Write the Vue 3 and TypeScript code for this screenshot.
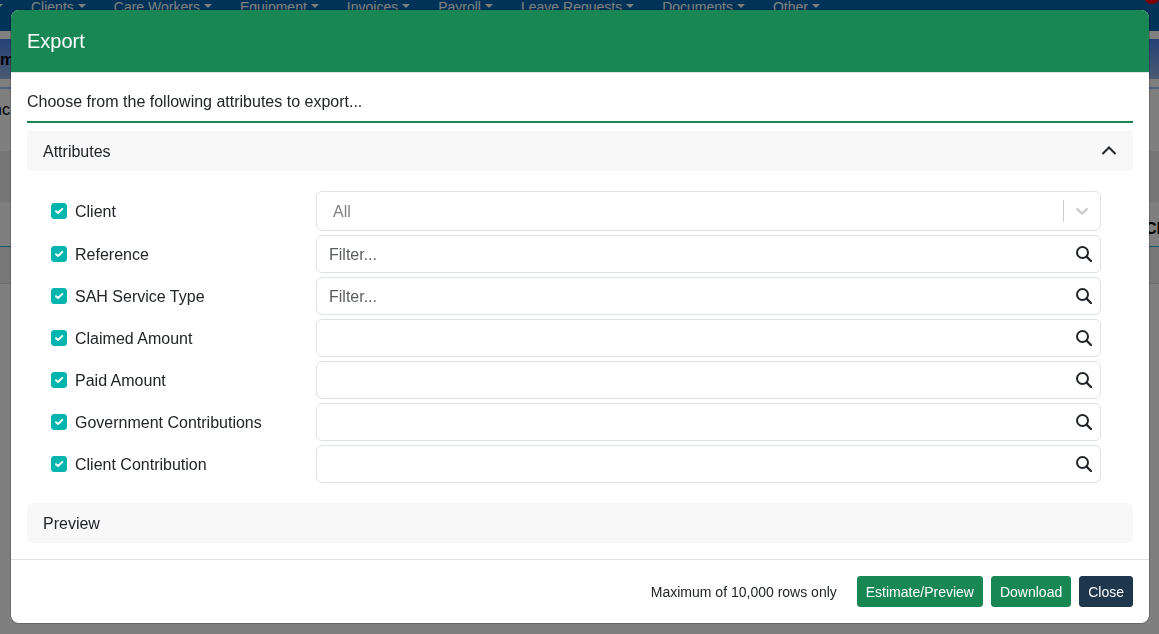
<script setup lang="ts">
import { ref } from 'vue'

interface Attribute {
  id: string
  label: string
  kind: 'select' | 'text'
  placeholder: string
  value: string
  checked: boolean
}

const menus: string[] = ['Clients', 'Care Workers', 'Equipment', 'Invoices', 'Payroll', 'Leave Requests', 'Documents', 'Other']

const make = (id: string, label: string, placeholder = '', kind: 'select' | 'text' = 'text'): Attribute => ({
  id, label, kind, placeholder, value: '', checked: true,
})

const attributes = ref<Attribute[]>([
  make('client', 'Client', 'All', 'select'),
  make('reference', 'Reference', 'Filter...'),
  make('service-type', 'SAH Service Type', 'Filter...'),
  make('claimed', 'Claimed Amount'),
  make('paid', 'Paid Amount'),
  make('government', 'Government Contributions'),
  make('contribution', 'Client Contribution'),
])

const attributesOpen = ref(true)
</script>

<template>
  <div class="page">
    <nav class="navbar">
      <span class="caret"></span>
      <a v-for="m in menus" :key="m" href="#" class="menu">{{ m }}<span class="caret"></span></a>
      <span class="badge"></span>
    </nav>
    <div class="banner"><b>m</b></div>
    <div class="tabs"><span>nc</span></div>
    <div class="stripe"></div>
    <div class="grid-head"><b>Cl</b></div>
    <div class="grid-row"></div>
  </div>

  <div class="backdrop">
    <section class="modal" role="dialog" aria-modal="true" aria-labelledby="export-title">
      <header class="modal-header">
        <h1 id="export-title">Export</h1>
      </header>
      <div class="modal-body">
        <p class="intro">Choose from the following attributes to export...</p>

        <button class="section-toggle open" type="button" :aria-expanded="attributesOpen" @click="attributesOpen = !attributesOpen">
          Attributes
          <svg width="16" height="16" viewBox="0 0 16 16" aria-hidden="true">
            <path d="M1.5 10 8 3.5 14.5 10" fill="none" stroke="#212529" stroke-width="2" />
          </svg>
        </button>

        <div v-if="attributesOpen" class="fields">
          <div v-for="a in attributes" :key="a.id" class="field">
            <label class="check">
              <input v-model="a.checked" type="checkbox" />
              <span>{{ a.label }}</span>
            </label>
            <div v-if="a.kind === 'select'" class="control select-control">
              <select v-model="a.value" :aria-label="a.label">
                <option value="">{{ a.placeholder }}</option>
              </select>
              <span class="chevron">
                <svg width="20" height="20" viewBox="0 0 20 20" aria-hidden="true">
                  <path d="M5.2 8.2 10 12.6 14.8 8.2" fill="none" stroke="#ccc" stroke-width="2.4" stroke-linecap="round" stroke-linejoin="round" />
                </svg>
              </span>
            </div>
            <div v-else class="control">
              <input v-model="a.value" type="text" :placeholder="a.placeholder" :aria-label="a.label" />
              <button class="search" type="button" :aria-label="'Search ' + a.label">
                <svg width="16" height="16" viewBox="0 0 16 16" aria-hidden="true">
                  <circle cx="6.5" cy="6.5" r="5.5" fill="none" stroke="#212529" stroke-width="2" />
                  <path d="M10.6 10.6 15.2 15.2" fill="none" stroke="#212529" stroke-width="2.2" stroke-linecap="round" />
                </svg>
              </button>
            </div>
          </div>
        </div>

        <button class="section-toggle" type="button" aria-expanded="false">Preview</button>
      </div>
      <footer class="modal-footer">
        <span class="note">Maximum of 10,000 rows only</span>
        <button class="btn" type="button">Estimate/Preview</button>
        <button class="btn" type="button">Download</button>
        <button class="btn dark" type="button">Close</button>
      </footer>
    </section>
  </div>
</template>

<style>
body {
  overflow: hidden;
  background: #fff;
}
</style>

<style scoped>
* {
  box-sizing: border-box;
}
.page,
.backdrop {
  font-family: "Liberation Sans", Arial, sans-serif;
  font-size: 16px;
  line-height: 24px;
  color: #212529;
}
button,
input,
select {
  font: inherit;
  color: inherit;
}

/* Page behind the dialog */
.navbar {
  position: relative;
  display: flex;
  gap: 28px;
  height: 31px;
  overflow: hidden;
  background: #0066ae;
  color: #fff;
  font-size: 14px;
  line-height: 14px;
}
.navbar > .caret {
  margin: 4px 0 0 -5px;
}
.menu {
  display: flex;
  gap: 4px;
  color: #fff;
  text-decoration: none;
  white-space: nowrap;
}
.caret {
  width: 0;
  height: 0;
  margin-top: 4px;
  border: 4px solid transparent;
  border-top-color: currentColor;
  border-bottom: 0;
}
.badge {
  position: absolute;
  top: -12px;
  right: -1px;
  width: 16px;
  height: 16px;
  border-radius: 8px;
  background: #f00;
}
.banner {
  height: 40px;
  margin-top: 8px;
  padding-top: 1px;
  line-height: 40px;
  color: #000;
  background: linear-gradient(#4a82f0, #96b4e4);
}
.tabs {
  height: 40px;
  margin-top: 8px;
  padding-top: 1px;
  border-top: 2px solid #a0c4f4;
  line-height: 40px;
  color: #000;
}
.tabs span {
  margin-left: -7px;
}
.stripe {
  height: 51px;
  margin-top: 24px;
  background: #ececec;
}
.grid-head {
  display: flex;
  justify-content: flex-end;
  align-items: flex-end;
  height: 45px;
  padding-bottom: 5px;
  border-bottom: 1px solid #00b4d0;
  color: #000;
}
.grid-head b {
  margin-right: -2px;
}
.grid-row {
  height: 37px;
  background: #f0f0f0;
  border-bottom: 1px solid #dcdcdc;
}

/* Dialog */
.backdrop {
  position: fixed;
  inset: 0;
  padding: 10px 10px 10px 11px;
  overflow: auto;
  background: rgba(0, 0, 0, 0.5);
}
.modal {
  border-radius: 8px;
  overflow: hidden;
  background: #fff;
  box-shadow: 0 0 0 1px rgba(0, 0, 0, 0.18);
}
.modal-header {
  padding: 16px;
  border-bottom: 1px solid #dee2e6;
  background: #198754;
  background-clip: padding-box;
  color: #fff;
}
.modal-header h1 {
  margin: 0;
  font-size: 20px;
  font-weight: 400;
  line-height: 30px;
}
.modal-body {
  padding: 16px;
}
.intro {
  margin: 0 0 8px;
  padding: 1px 0 7px;
  border-bottom: 2px solid #198754;
}
.section-toggle {
  display: flex;
  align-items: center;
  justify-content: space-between;
  width: 100%;
  padding: 9px 16px 7px;
  border: 0;
  border-radius: 6px;
  background: #f8f8f8;
  text-align: left;
}
.section-toggle.open {
  border-radius: 0;
}
.fields {
  display: grid;
  gap: 4px;
  padding: 20px 32px 20px 24px;
}
.field {
  display: grid;
  grid-template-columns: 265px minmax(0, 1fr);
  align-items: center;
}
.check {
  display: flex;
  align-items: center;
  gap: 8px;
}
.check span {
  padding-top: 2px;
}
.check input {
  appearance: none;
  flex: none;
  width: 16px;
  height: 16px;
  margin: 0;
  border: 1px solid #00b5ad;
  border-radius: 3px;
}
.check input:checked {
  background: #00b5ad url("data:image/svg+xml,%3Csvg xmlns='http://www.w3.org/2000/svg' viewBox='0 0 14 14'%3E%3Cpath d='M4 7.2 6.1 9 10.3 4.9' fill='none' stroke='white' stroke-width='2' stroke-linecap='round' stroke-linejoin='round'/%3E%3C/svg%3E") center / 14px no-repeat;
}
.control {
  display: flex;
  align-items: center;
  height: 38px;
  border: 1px solid #dee2e6;
  border-radius: 6px;
  background: #fff;
}
.control input {
  flex: 1;
  min-width: 0;
  padding: 7px 12px 5px;
  border: 0;
  outline: 0;
  background: none;
}
.control input::placeholder {
  color: #595c5f;
  opacity: 1;
}
.select-control {
  height: 40px;
}
.control select {
  appearance: none;
  flex: 1;
  min-width: 0;
  height: 38px;
  padding: 2px 16px 0;
  border: 0;
  background: none;
  color: #808080;
}
.chevron {
  display: flex;
  padding: 1px 8px;
  border-left: 1px solid #ccc;
}
.search {
  display: flex;
  padding: 8px;
  border: 0;
  background: none;
}
.modal-footer {
  display: flex;
  align-items: center;
  justify-content: flex-end;
  gap: 8px;
  padding: 16px;
  border-top: 1px solid #dee2e6;
  font-size: 14px;
  line-height: 21px;
}
.note {
  margin-right: 12px;
  padding-top: 2px;
}
.btn {
  padding: 5px 8px 3px;
  border: 1px solid #198754;
  border-radius: 3px;
  background: #198754;
  color: #fff;
}
.btn.dark {
  border-color: #1e374d;
  background: #1e374d;
}
</style>
